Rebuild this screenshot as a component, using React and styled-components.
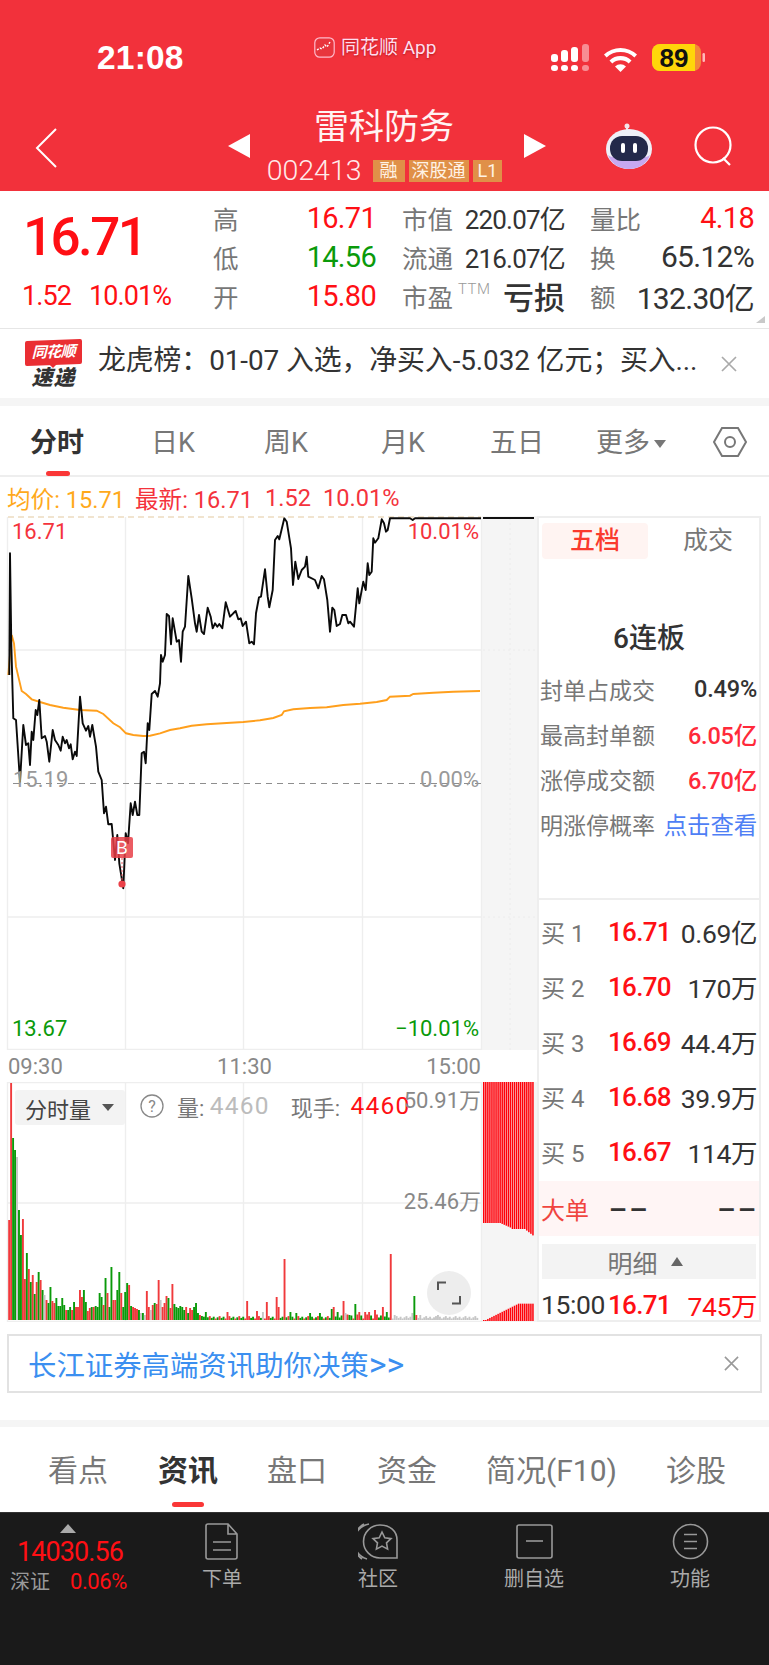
import React from 'react';
import styled, { createGlobalStyle } from 'styled-components';

const Global = createGlobalStyle`
  html, body { margin: 0; padding: 0; background: #fff; }
  body { font-family: Roboto, "Noto Sans CJK SC", sans-serif; }
  * { box-sizing: border-box; }
`;

const RED = '#ff0f14';
const SOFT_RED = '#f4333c';
const GREEN = '#0a9a0a';

const Page = styled.div`
  width: 769px; height: 1665px; overflow: hidden; background: #fff; position: relative; color: #333;
`;

/* header */
const Header = styled.header`
  height: 191px; background: #f2313b; color: #fff; display: flex; flex-direction: column;
`;
const StatusRow = styled.div`
  height: 107px; display: flex; align-items: flex-start; position: relative;
`;
const Clock = styled.div`
  width: 314px; padding: 40px 0 0 97px; font: 700 33.5px/36px "Liberation Sans", sans-serif; letter-spacing: .2px;
`;
const Carrier = styled.div`
  width: 237px; padding-top: 37px; display: flex; align-items: center; gap: 6px; height: 58px;
  font-size: 19px; line-height: 22px; text-shadow: 0 1px 2px rgba(120,0,0,.5); color: #fde;
`;
const StatusIcons = styled.svg`
  margin-top: 40px; display: block;
`;
const NavRow = styled.div`
  height: 84px; display: flex; align-items: flex-start;
`;
const NavLeft = styled.div`
  width: 228px; padding: 21px 0 0 35px;
`;
const Arrow = styled.div`
  width: 0; height: 0; margin-top: 27px; border-top: 12px solid transparent; border-bottom: 12px solid transparent;
  ${p => p.$dir === 'left' ? 'border-right: 22px solid #fff;' : 'border-left: 22px solid #fff;'}
`;
const NavCenter = styled.div`
  width: 274px; display: flex; flex-direction: column; align-items: center;
`;
const Title = styled.div`
  font-size: 35px; line-height: 42px; margin: 0 6px 0 0; height: 52px; font-weight: 400; color: #fff3f3;
`;
const CodeLine = styled.div`
  display: flex; align-items: center; gap: 4px; height: 22px; margin: 1px 5px 0 0;
`;
const Code = styled.span`
  font-size: 28.500px; font-weight: 300; line-height: 22px; margin-right: 7px; letter-spacing: 0; color: #ffeaea;
`;
const Tag = styled.span`
  height: 22px; padding: 0 ${p => p.$pad || 3}px; background: #e09048; color: #fff3e6; font-size: 18px; line-height: 22px;
  display: inline-flex; align-items: center; justify-content: center;
`;
const NavRight = styled.div`
  display: flex; align-items: flex-start; padding-top: 16px;
`;

/* quote */
const Quote = styled.section`
  height: 138px; display: flex; border-bottom: 1px solid #e6e6e6; position: relative; padding-top: 7px;
`;
const PriceCol = styled.div`
  width: 213px; padding-left: 23px;
`;
const BigPrice = styled.div`
  font-size: 53px; line-height: 56px; font-weight: 500; color: ${RED}; letter-spacing: -2.6px; margin-top: 11px; white-space: nowrap;
`;
const PriceSub = styled.div`
  display: flex; gap: 18px; margin-top: 16px; color: ${RED}; font-size: 27px; line-height: 30px; letter-spacing: -.9px;
  margin-left: -1px;
`;
const StatCol = styled.div`
  width: ${p => p.$w}px; margin-right: ${p => p.$mr || 0}px; flex: none;
`;
const StatRow = styled.div`
  height: 39px; display: flex; justify-content: space-between; align-items: center; white-space: nowrap;
`;
const StatLabel = styled.span`
  font-size: 25.5px; color: #777; display: inline-flex; align-items: flex-start;
`;
const Ttm = styled.sup`
  font-size: 15px; color: #999; line-height: 18px; margin: 3px 0 0 5px; letter-spacing: .5px; font-weight: 300;
`;
const StatValue = styled.span`
  font-size: ${p => p.$size || 29}px; font-weight: ${p => p.$weight || 400}; color: ${p => p.$c || '#333'}; letter-spacing: ${p => p.$ls ?? -.7}px;
`;
const Corner = styled.div`
  position: absolute; right: 4px; bottom: 5px; width: 0; height: 0;
  border-bottom: 7px solid #c9c9c9; border-left: 9px solid transparent;
`;

/* ticker */
const Ticker = styled.div`
  height: 69px; display: flex; align-items: center; padding: 0 32px 0 25px;
`;
const LogoBox = styled.div`
  width: 57px; height: 48px; display: flex; flex-direction: column; align-items: center; margin-right: 16px; position: relative;
`;
const LogoTag = styled.div`
  width: 57px; height: 25px; background: #ea2e33; color: #fff; border-radius: 2px; font-size: 15px; font-weight: 700; font-style: italic;
  display: flex; align-items: center; justify-content: center; line-height: 25px; letter-spacing: -.5px; transform: skewY(-2deg);
  &::after { content: ''; position: absolute; left: 24px; top: 24px; border-top: 4px solid #ea2e33; border-left: 4px solid transparent; border-right: 4px solid transparent; }
`;
const LogoText = styled.div`
  font-size: 21px; line-height: 22px; font-weight: 900; font-style: italic; color: #333; margin-top: 2px; letter-spacing: 1px;
`;
const TickerText = styled.div`
  flex: 1; font-size: 27.9px; line-height: 32px; margin-top: -6px; color: #333; white-space: nowrap; letter-spacing: -.1px;
`;
const Band = styled.div`
  height: ${p => p.$h}px; background: #f5f5f5;
`;
const CloseX = styled.svg`
  display: block; flex: none;
`;

/* period tabs */
const PeriodTabs = styled.nav`
  height: 71px; position: relative; border-bottom: 2px solid #eee; display: flex;
`;
const PeriodTab = styled.div`
  position: absolute; left: ${p => p.$x}px; top: 17px; font-size: 27px; line-height: 40px; white-space: nowrap;
  color: ${p => p.$on ? '#333' : '#777'}; font-weight: ${p => p.$on ? 700 : 400};
`;
const RedBar = styled.div`
  position: absolute; left: ${p => p.$x}px; top: ${p => p.$y}px; width: ${p => p.$w}px; height: 5px; border-radius: 3px; background: #fa3737;
`;
const SmallDown = styled.span`
  display: inline-block; width: 0; height: 0; margin-left: 4px; vertical-align: 4px;
  border-top: 8px solid #777; border-left: 6px solid transparent; border-right: 6px solid transparent;
`;
const HexIcon = styled.svg`
  position: absolute; left: 712px; top: 20px;
`;

/* info line */
const InfoLine = styled.div`
  height: 39px; display: flex; align-items: center; padding: 2px 0 0 7px; font-size: 23.6px; white-space: nowrap;
`;
const InfoText = styled.span`
  color: ${p => p.$c}; margin-right: ${p => p.$mr || 0}px;
`;

/* body */
const Body = styled.div`
  display: flex; height: 806px; align-items: flex-start;
`;
const LeftCol = styled.div`
  width: 538px; flex: none;
`;
const ChartBox = styled.div`
  position: relative; width: 538px; height: ${p => p.$h}px;
`;
const ChartSvg = styled.svg`
  display: block;
`;
const ChartLabel = styled.span`
  position: absolute; font-size: 22px; line-height: 24px; white-space: nowrap; color: ${p => p.$c};
  ${p => p.$right != null ? `right: ${p.$right}px;` : `left: ${p.$left}px;`} top: ${p => p.$top}px;
`;
const BMark = styled.div`
  position: absolute; left: 111px; top: 321px; width: 22px; height: 21px; background: rgba(232,64,72,.85); border-radius: 2px;
  color: #fff; font-size: 19px; line-height: 21px; text-align: center;
`;
const Axis = styled.div`
  height: 32px; display: flex; justify-content: space-between; align-items: center; padding: 0 57px 0 8px;
  font-size: 22px; color: #888;
`;
const VolChip = styled.div`
  position: absolute; left: 15px; top: 8px; width: 110px; height: 35px; background: #f3f3f3; border-radius: 3px;
  display: flex; align-items: center; padding-left: 10px; font-size: 22px; color: #444; gap: 11px;
`;
const ChipCaret = styled.span`
  width: 0; height: 0; border-top: 7px solid #555; border-left: 6px solid transparent; border-right: 6px solid transparent;
`;
const VolLine = styled.div`
  position: absolute; left: 140px; top: 6px; height: 35px; display: flex; align-items: center; font-size: 22px; color: #777; white-space: nowrap;
`;
const HelpIcon = styled.svg`
  margin-right: 13px;
`;
const Num = styled.span`
  color: ${p => p.$c}; margin-right: ${p => p.$mr || 0}px; margin-left: ${p => p.$ml || 0}px; font-size: 24.500px; letter-spacing: 1.2px;
`;
const Expand = styled.div`
  position: absolute; left: 427px; top: 189px; width: 44px; height: 44px; border-radius: 50%; background: rgba(235,235,235,.92);
  display: flex; align-items: center; justify-content: center;
`;

/* side panel */
const Side = styled.aside`
  width: 224px; height: 806px; flex: none; margin-left: -1px; border: 2px solid #eee; display: flex; flex-direction: column;
`;
const SideTabs = styled.div`
  display: flex; padding: 5px 0 0 3px; height: 42px; overflow: hidden;
`;
const SideTab = styled.div`
  flex: none; width: ${p => p.$w}px; margin-left: ${p => p.$ml || 0}px; height: 36px; border-radius: 4px; font-size: 25px; line-height: 36px; text-align: center;
  color: ${p => p.$on ? '#fa3a2e' : '#777'}; background: ${p => p.$on ? '#fff4f2' : 'transparent'}; font-weight: ${p => p.$on ? 500 : 400};
`;
const Upper = styled.div`
  height: 342px; border-bottom: 2px solid #eee; padding-top: 61px;
`;
const Heading = styled.div`
  text-align: center; font-size: 28px; line-height: 36px; font-weight: 500; color: #333; margin-bottom: 10px;
`;
const InfoRow = styled.div`
  height: 45px; display: flex; align-items: center; justify-content: space-between; padding: 0 2px 0 1px; white-space: nowrap;
`;
const InfoName = styled.span`
  font-size: 23px; color: #777; letter-spacing: 0;
`;
const InfoVal = styled.span`
  font-size: 23.500px; color: ${p => p.$c || '#333'}; font-weight: ${p => p.$weight || 500}; letter-spacing: -.2px;
`;
const Levels = styled.div`
  padding-top: 4px;
`;
const LevelRow = styled.div`
  height: ${p => p.$h || 55}px; display: grid; grid-template-columns: 67px 62px 1fr; align-items: center; padding: ${p => p.$pt || 0}px 2px 0 2px; white-space: nowrap;
  margin-top: ${p => p.$mt || 0}px;
  ${p => p.$bg && `background: ${p.$bg};`}
`;
const LevelName = styled.span`
  font-size: 24px; color: ${p => p.$c || '#777'};
`;
const LevelPrice = styled.span`
  font-size: 26px; color: ${p => p.$c || RED}; font-weight: 500; letter-spacing: -.7px;
`;
const LevelVol = styled.span`
  font-size: 26.500px; color: ${p => p.$c || '#333'}; text-align: ${p => p.$align || 'right'}; font-weight: 400; letter-spacing: -.4px;
`;
const Dash = styled.span`
  display: inline-block; font-size: 26px; font-weight: 700; color: #333; letter-spacing: 0; transform: scaleX(2);
  transform-origin: ${p => p.$end ? 'right' : 'left'} center; justify-self: ${p => p.$end ? 'end' : 'start'};
`;
const DetailBtn = styled.div`
  margin: 8px 3px 0; height: 35px; background: #f3f3f3; display: flex; align-items: center; justify-content: center; gap: 13px;
  font-size: 25px; color: #777; padding-right: 8px;
`;
const UpCaret = styled.span`
  width: 0; height: 0; border-bottom: 9px solid #666; border-left: 6px solid transparent; border-right: 6px solid transparent;
`;

/* ad */
const Ad = styled.div`
  margin: 12px 7px 0; height: 59px; border: 2px solid #e2e2e2; display: flex; align-items: center; justify-content: space-between;
  padding: 0 21px 0 19px; font-size: 28.4px; color: #3b8ff0; white-space: nowrap;
`;
const AdMore = styled.span`
  font-size: 34px; line-height: 34px;
`;
const Gap = styled.div`
  height: 27px;
`;

/* bottom tabs */
const InfoTabs = styled.nav`
  height: 85px; position: relative;
`;
const InfoTab = styled.div`
  position: absolute; left: ${p => p.$x}px; top: 24px; font-size: 30px; line-height: 40px; white-space: nowrap;
  color: ${p => p.$on ? '#333' : '#777'}; font-weight: ${p => p.$on ? 700 : 400};
`;

/* bar */
const BottomBar = styled.footer`
  height: 154px; background: #1a1a1a; border-top: 1px solid #333; display: flex; align-items: flex-start;
`;
const IndexCell = styled.div`
  width: 144px; flex: none; padding-top: 11px; display: flex; flex-direction: column; align-items: flex-start; position: relative;
`;
const IndexUp = styled.div`
  margin-left: 60px; width: 0; height: 0; border-bottom: 9px solid #aaa; border-left: 8.5px solid transparent; border-right: 8.5px solid transparent;
`;
const IndexValue = styled.div`
  margin: 2px 0 0 17px; font-size: 27px; line-height: 34px; color: ${RED}; letter-spacing: -.9px;
`;
const IndexSub = styled.div`
  display: flex; align-items: center; gap: 20px; margin: -1px 0 0 10px; line-height: 28px;
`;
const IndexName = styled.span`
  color: #999; font-size: 20px;
`;
const IndexPct = styled.span`
  color: ${RED}; font-size: 22px; letter-spacing: -.4px;
`;
const BarItem = styled.div`
  width: 156px; flex: none; display: flex; flex-direction: column; align-items: center; padding-top: 10px; color: #aaa; font-size: 20px; line-height: 26px; gap: 6px;
`;

const BAR_RED = '#f03a3c';
const pts = s => s.trim().split(/\s+/).map(p => { const [x, y] = p.split(',').map(Number); return `${(x / 3).toFixed(1)},${(510 + y / 3).toFixed(1)}`; }).join(' ');

const PRICE = pts(`28,495 30,130 34,400 40,625 48,630 60,815 70,645 78,705 85,700 90,765 95,665 100,690 107,600 112,615 118,570 125,685 135,678 140,695 148,755 158,660 165,690 175,705 182,722 188,680 195,700 200,690 207,715 212,703 218,748 225,725 230,738 240,560 248,640 258,662 265,648 270,680 277,645 288,710 295,785 305,810 312,910 318,890 325,943 335,942 345,1050 352,975 358,1060 370,1135 377,970 384,1000 392,880 398,915 405,875 412,915 418,915 425,730 432,725 437,760 443,640 448,660 455,552 465,543 473,560 480,520 483,435 488,455 495,435 500,312 507,318 513,403 518,325 530,395 537,390 543,455 548,365 555,350 565,198 575,265 585,340 590,365 597,315 605,365 612,372 623,293 632,320 638,355 645,340 652,350 658,342 667,355 677,277 690,320 700,310 707,303 715,328 722,325 728,348 738,335 748,400 755,395 762,403 768,310 777,262 783,260 795,178 803,260 808,292 818,240 825,90 833,78 838,88 853,25 860,35 873,115 879,225 886,155 895,207 905,180 915,170 920,140 925,200 945,210 955,235 965,198 972,208 982,270 990,365 997,293 1003,300 1010,348 1020,342 1027,315 1038,315 1045,340 1050,335 1062,350 1073,235 1078,280 1090,215 1097,240 1103,160 1108,195 1115,185 1120,85 1125,98 1135,85 1145,28 1152,40 1158,65 1163,60 1170,25 1230,25 1238,30 1245,25 1443,25`);
const AVG = pts(`25,495 35,375 42,400 48,470 65,543 78,552 95,568 120,576 150,585 190,593 240,600 290,602 310,612 340,640 360,652 378,670 400,675 430,678 450,677 480,670 510,660 540,655 575,647 620,643 680,639 730,636 780,631 820,624 845,615 852,604 880,598 930,594 980,592 1030,585 1080,581 1130,576 1160,570 1170,560 1230,557 1240,552 1300,548 1360,545 1440,543`);

const HEAD = '100r 237r 182g 170g 163x 110g 85g 101r 41r 67g 51r 38g 45r 26g 38r 48g 40r 30g 25x 20r 17g 33g 19r 17r 22g 14g 14g 22g 15g 10r 10g 13g 10r 18g 13r 13r 30r 23r 30g 18g 9r 12r 13g 13r 14g 13g 27g 23g 15r 42g 27r 13g 53g 20r 20r 30g 48g 27r 13g 28g 37g 35r 14g 13r 12r 11r 10g 7x 7g 5x 29r 13r 10x 15r 17g 16r 40r 20x 13r 17r 24r 22g 12r 36r 16g 13g 12g 14g 13g 10g 13r 7g 12r 10r 13g 17g 7g 5r 4g';
const OVERRIDES = [[615,8,'g'],[680,8,'r'],[740,19,'r'],[770,9,'r'],[785,8,'x'],[800,18,'r'],[830,23,'r'],[836,13,'r'],[853,61,'r'],[870,8,'g'],[885,7,'g'],[930,7,'g'],[960,7,'g'],[990,8,'g'],[995,11,'g'],[1001,13,'r'],[1010,8,'g'],[1030,19,'r'],[1036,7,'x'],[1047,5,'g'],[1065,16,'g'],[1075,8,'r'],[1090,8,'r'],[1107,8,'r'],[1125,10,'r'],[1148,13,'r'],[1155,8,'g'],[1171,66,'r'],[1180,5,'x'],[1237,7,'x'],[1242,24,'g'],[1248,5,'r'],[1260,5,'x'],[1310,5,'x']];
const COLORS = { r: BAR_RED, g: GREEN, x: '#c6c6c6' };

function buildBars() {
  const bars = HEAD.split(' ').map(t => ({ h: parseFloat(t), c: t.slice(-1) }));
  for (let i = bars.length; i < 239; i++) {
    const h = 1.5 + ((i * 7) % 5) * (i > 165 && i < 195 ? 1 : .6);
    const c = i < 195 ? ((i * 3) % 5 < 2 ? 'r' : 'g') : 'x';
    bars.push({ h, c });
  }
  OVERRIDES.forEach(([zx, h, c]) => { const i = Math.round((zx - 25) / 5.9); bars[i] = { h, c }; });
  return bars;
}
const BARS = buildBars();
const GRID = '#eeeeee';
const TAIL = Array.from({ length: 25 }, (_, i) => i);

const PriceChart = () => (
  <ChartBox $h={534}>
    <ChartSvg width="538" height="534" viewBox="0 516 538 534">
      <rect x="482" y="516" width="55" height="534" fill="#f5f5f5" />
      <line x1="510" y1="518" x2="510" y2="1050" stroke="#ececec" strokeDasharray="2 3" />
      <line x1="483" y1="650" x2="537" y2="650" stroke="#ececec" strokeDasharray="2 3" />
      <line x1="483" y1="917" x2="537" y2="917" stroke="#ececec" strokeDasharray="2 3" />
      <path d="M7.5 517V1049.5H481.5V517M125.5 517V1049M243.5 517V1049M362.5 517V1049M8 650H481M8 917H481" fill="none" stroke={GRID} strokeWidth="1.4" />
      <line x1="8" y1="517" x2="481" y2="517" stroke="#e3c9a0" strokeWidth="1.2" strokeDasharray="6 4" />
      <line x1="13" y1="783.5" x2="481" y2="783.5" stroke="#8e8e8e" strokeWidth="1.2" strokeDasharray="6 5" />
      <polyline points={AVG} fill="none" stroke="#ff9f1c" strokeWidth="1.9" />
      <polyline points={PRICE} fill="none" stroke="#0a0a0a" strokeWidth="1.9" strokeLinejoin="round" />
      <line x1="483" y1="518" x2="534" y2="518" stroke="#111" strokeWidth="2" />
      <line x1="122" y1="858" x2="122" y2="884" stroke="#ee5a60" strokeWidth="1" strokeDasharray="2 2" />
      <circle cx="122" cy="884" r="3.6" fill="#ea4048" />
    </ChartSvg>
    <ChartLabel $left={12} $top={4} $c={SOFT_RED}>16.71</ChartLabel>
    <ChartLabel $right={59} $top={4} $c={SOFT_RED}>10.01%</ChartLabel>
    <ChartLabel $left={13} $top={252} $c="#999">15.19</ChartLabel>
    <ChartLabel $right={59} $top={252} $c="#999">0.00%</ChartLabel>
    <ChartLabel $left={12} $top={501} $c={GREEN}>13.67</ChartLabel>
    <ChartLabel $right={59} $top={501} $c={GREEN}>−10.01%</ChartLabel>
    <BMark>B</BMark>
  </ChartBox>
);

const VolumeChart = () => (
  <ChartBox $h={240}>
    <ChartSvg width="538" height="240" viewBox="0 1082 538 240">
      <rect x="482" y="1082" width="55" height="240" fill="#f5f5f5" />
      <path d="M7.5 1082.500H481.500V1321.500H7.5ZM125.500 1083V1321M243.500 1083V1321M362.500 1083V1321M8 1203H481" fill="none" stroke={GRID} strokeWidth="1.4" />
      {BARS.map((b, i) => (
        <rect key={i} x={8.2 + i * 1.967} y={1320 - b.h} width="1.9" height={b.h} fill={COLORS[b.c]} />
      ))}
      {TAIL.map(i => {
        const bottom = i < 8 ? 1223 : i < 14 ? 1223 + (i - 8) * .9 : i < 21 ? 1229 : 1229 + (i - 20) * 1.6;
        const low = Math.max(1, Math.min(i, 17) * 1.02);
        return (
          <g key={i} fill="#ff0009">
            <rect x={483 + i * 2.05} y="1082" width="1.500" height={bottom - 1082} />
            <rect x={483 + i * 2.05} y={1321 - low} width="1.500" height={low} />
          </g>
        );
      })}
    </ChartSvg>
    <VolChip>分时量<ChipCaret /></VolChip>
    <VolLine>
      <HelpIcon width="24" height="24" viewBox="0 0 24 24">
        <circle cx="12" cy="12" r="11" fill="none" stroke="#888" strokeWidth="1.3" />
        <text x="12" y="17.5" textAnchor="middle" fontSize="16" fill="#888" fontFamily="Roboto">?</text>
      </HelpIcon>
      量:&nbsp;<Num $c="#bcbcbc" $mr={21}>4460</Num>现手:&nbsp;<Num $c={RED} $ml={5}>4460</Num>
    </VolLine>
    <ChartLabel $right={57} $top={7} $c="#888">50.91万</ChartLabel>
    <ChartLabel $right={57} $top={108} $c="#888">25.46万</ChartLabel>
    <Expand>
      <svg width="24" height="24" viewBox="0 0 24 24" fill="none" stroke="#555" strokeWidth="2">
        <path d="M1 9V1.5H9M23 15V22.5H15" />
      </svg>
    </Expand>
  </ChartBox>
);

const X = ({ size = 16, c = '#aaa' }) => (
  <CloseX width={size} height={size} viewBox="0 0 16 16" fill="none" stroke={c} strokeWidth="1.7">
    <path d="M1 1L15 15M15 1L1 15" />
  </CloseX>
);

const LEVELS = [['买 1', '16.71', '0.69亿'], ['买 2', '16.70', '170万'], ['买 3', '16.69', '44.4万'], ['买 4', '16.68', '39.9万'], ['买 5', '16.67', '114万']];

export default function App() {
  return (
    <Page>
      <Global />
      <Header>
        <StatusRow>
          <Clock>21:08</Clock>
          <Carrier>
            <svg width="21" height="21" viewBox="0 0 21 21">
              <rect x=".8" y=".8" width="19.4" height="19.4" rx="5" fill="#e8353d" stroke="#fbc" strokeWidth="1.2" />
              <path d="M3 13l3-2 2 1 3-4 2 2 3-5" fill="none" stroke="#fff" strokeWidth="1.4" strokeDasharray="2 1.5" />
            </svg>
            同花顺 App
          </Carrier>
          <StatusIcons width="218" height="36" viewBox="0 0 218 36">
            <g fill="#fff">
              <rect x="0" y="25" width="7" height="6" rx="3" />
              <rect x="10" y="25" width="7" height="6" rx="3" />
              <rect x="20" y="25" width="7" height="6" rx="3" />
              <rect x="31" y="25" width="7" height="6" rx="3" opacity=".45" />
              <rect x="0" y="14" width="7" height="8" rx="3" />
              <rect x="10" y="10" width="7" height="12" rx="3" />
              <rect x="20" y="7" width="7" height="15" rx="3" />
              <rect x="31" y="4" width="7" height="18" rx="3" opacity=".45" />
              <path d="M53 14.5a24 24 0 0 1 33 0l-2.6 3a20 20 0 0 0-27.8 0z" />
              <path d="M58.5 20.5a16 16 0 0 1 22 0l-2.8 3a12 12 0 0 0-16.4 0z" />
              <path d="M64 26.5a8 8 0 0 1 11 0l-5.5 5.5z" />
            </g>
            <rect x="101" y="4" width="49" height="27" rx="8" fill="#f3a63a" opacity=".75" />
            <path d="M109 4H144V31H109a8 8 0 0 1-8-8V12a8 8 0 0 1 8-8z" fill="#ffd60a" />
            <rect x="151.500" y="13" width="2.500" height="9" rx="1.200" fill="#ffb9b9" />
            <text x="123" y="26.500" textAnchor="middle" fontSize="26" fontWeight="700" fill="#111" fontFamily="Liberation Sans">89</text>
          </StatusIcons>
        </StatusRow>
        <NavRow>
          <NavLeft>
            <svg width="23" height="40" viewBox="0 0 23 40" fill="none" stroke="#fff" strokeWidth="2">
              <path d="M21 1L2 20L21 39" />
            </svg>
          </NavLeft>
          <Arrow $dir="left" />
          <NavCenter>
            <Title>雷科防务</Title>
            <CodeLine>
              <Code>002413</Code>
              <Tag $pad={7}>融</Tag>
              <Tag>深股通</Tag>
              <Tag $pad={5}>L1</Tag>
            </CodeLine>
          </NavCenter>
          <Arrow $dir="right" />
          <NavRight>
            <svg width="50" height="46" viewBox="0 0 50 46" style={{ marginLeft: 58 }}>
              <circle cx="23" cy="3" r="2.500" fill="#f4e6ea" />
              <path d="M23 5V9" stroke="#f4e6ea" strokeWidth="2" />
              <ellipse cx="25" cy="26" rx="23" ry="20" fill="#eef0f8" />
              <path d="M4 32c3 9 12 14 21 14s18-5 21-14c-6 5-36 5-42 0z" fill="#c7a8f0" />
              <rect x="6" y="13" width="38" height="25" rx="12" fill="#23294a" />
              <rect x="17" y="20" width="4" height="10" rx="2" fill="#fff" />
              <rect x="29" y="20" width="4" height="10" rx="2" fill="#fff" />
            </svg>
            <svg width="42" height="42" viewBox="0 0 42 42" fill="none" stroke="#fff" strokeWidth="2.2" style={{ marginLeft: 39, marginTop: 3 }}>
              <circle cx="20" cy="19" r="17.500" />
              <path d="M30 32L37 39" />
            </svg>
          </NavRight>
        </NavRow>
      </Header>

      <Quote>
        <PriceCol>
          <BigPrice>16.71</BigPrice>
          <PriceSub><span>1.52</span><span>10.01%</span></PriceSub>
        </PriceCol>
        <StatCol $w={163} $mr={26}>
          <StatRow><StatLabel>高</StatLabel><StatValue $c={RED}>16.71</StatValue></StatRow>
          <StatRow><StatLabel>低</StatLabel><StatValue $c={GREEN}>14.56</StatValue></StatRow>
          <StatRow><StatLabel>开</StatLabel><StatValue $c={RED}>15.80</StatValue></StatRow>
        </StatCol>
        <StatCol $w={163} $mr={25}>
          <StatRow><StatLabel>市值</StatLabel><StatValue $size={26} $ls={-.8}>220.07亿</StatValue></StatRow>
          <StatRow><StatLabel>流通</StatLabel><StatValue $size={26} $ls={-.8}>216.07亿</StatValue></StatRow>
          <StatRow><StatLabel>市盈<Ttm>TTM</Ttm></StatLabel><StatValue $size={31} $weight={500} $ls={0}>亏损</StatValue></StatRow>
        </StatCol>
        <StatCol $w={164}>
          <StatRow><StatLabel>量比</StatLabel><StatValue $c={RED}>4.18</StatValue></StatRow>
          <StatRow><StatLabel>换</StatLabel><StatValue $size={30}>65.12%</StatValue></StatRow>
          <StatRow><StatLabel>额</StatLabel><StatValue $size={30}>132.30亿</StatValue></StatRow>
        </StatCol>
        <Corner />
      </Quote>

      <Ticker>
        <LogoBox>
          <LogoTag>同花顺</LogoTag>
          <LogoText>速递</LogoText>
        </LogoBox>
        <TickerText>龙虎榜：01-07 入选，净买入-5.032 亿元；买入...</TickerText>
        <X size={16} />
      </Ticker>
      <Band $h={8} />

      <PeriodTabs>
        <PeriodTab $x={30} $on>分时</PeriodTab>
        <PeriodTab $x={151}>日K</PeriodTab>
        <PeriodTab $x={264}>周K</PeriodTab>
        <PeriodTab $x={381}>月K</PeriodTab>
        <PeriodTab $x={490}>五日</PeriodTab>
        <PeriodTab $x={596}>更多<SmallDown /></PeriodTab>
        <HexIcon width="36" height="32" viewBox="0 0 36 32" fill="none" stroke="#777" strokeWidth="2">
          <path d="M10 2H26L34 16L26 30H10L2 16Z" />
          <circle cx="18" cy="16" r="5" />
        </HexIcon>
        <RedBar $x={46} $y={65} $w={24} />
      </PeriodTabs>

      <InfoLine>
        <InfoText $c="#ffa91b" $mr={10}>均价: 15.71</InfoText>
        <InfoText $c={SOFT_RED} $mr={12}>最新: 16.71</InfoText>
        <InfoText $c={SOFT_RED} $mr={12}>1.52</InfoText>
        <InfoText $c={SOFT_RED}>10.01%</InfoText>
      </InfoLine>

      <Body>
        <LeftCol>
          <PriceChart />
          <Axis><span>09:30</span><span>11:30</span><span>15:00</span></Axis>
          <VolumeChart />
        </LeftCol>
        <Side>
          <SideTabs>
            <SideTab $w={106} $on>五档</SideTab>
            <SideTab $w={118} $ml={1}>成交</SideTab>
          </SideTabs>
          <Upper>
            <Heading>6连板</Heading>
            <InfoRow><InfoName>封单占成交</InfoName><InfoVal>0.49%</InfoVal></InfoRow>
            <InfoRow><InfoName>最高封单额</InfoName><InfoVal $c="#ff2a3a">6.05亿</InfoVal></InfoRow>
            <InfoRow><InfoName>涨停成交额</InfoName><InfoVal $c="#ff2a3a">6.70亿</InfoVal></InfoRow>
            <InfoRow><InfoName>明涨停概率</InfoName><InfoVal $c="#4f7ff5" $weight={400}>点击查看</InfoVal></InfoRow>
          </Upper>
          <Levels>
            {LEVELS.map(([n, p, v]) => (
              <LevelRow key={n}><LevelName>{n}</LevelName><LevelPrice>{p}</LevelPrice><LevelVol>{v}</LevelVol></LevelRow>
            ))}
            <LevelRow $bg="#fff5f5" $mt={2}>
              <LevelName $c="#f0453f">大单</LevelName>
              <Dash>--</Dash>
              <Dash $end>--</Dash>
            </LevelRow>
            <DetailBtn>明细<UpCaret /></DetailBtn>
            <LevelRow $h={41} $pt={6}>
              <LevelVol $align="left">15:00</LevelVol>
              <LevelPrice>16.71</LevelPrice>
              <LevelVol $c={RED}>745万</LevelVol>
            </LevelRow>
          </Levels>
        </Side>
      </Body>

      <Ad>
        <span>长江证券高端资讯助你决策<AdMore>&gt;&gt;</AdMore></span>
        <X size={15} c="#999" />
      </Ad>
      <Gap />
      <Band $h={7} />

      <InfoTabs>
        <InfoTab $x={48}>看点</InfoTab>
        <InfoTab $x={158} $on>资讯</InfoTab>
        <InfoTab $x={267}>盘口</InfoTab>
        <InfoTab $x={377}>资金</InfoTab>
        <InfoTab $x={486}>简况(F10)</InfoTab>
        <InfoTab $x={666}>诊股</InfoTab>
        <RedBar $x={172} $y={75} $w={32} />
      </InfoTabs>

      <BottomBar>
        <IndexCell>
          <IndexUp />
          <IndexValue>14030.56</IndexValue>
          <IndexSub><IndexName>深证</IndexName><IndexPct>0.06%</IndexPct></IndexSub>
        </IndexCell>
        <BarItem>
          <svg width="34" height="37" viewBox="0 0 34 37" fill="none" stroke="#999" strokeWidth="1.6">
            <path d="M3 1H23L32 11V34a2 2 0 0 1-2 2H3a2 2 0 0 1-2-2V3a2 2 0 0 1 2-2zM23 1V11H32M8 19H26M8 27H26" />
          </svg>
          下单
        </BarItem>
        <BarItem>
          <svg width="40" height="37" viewBox="0 0 40 37" fill="none" stroke="#999" strokeWidth="1.6">
            <path d="M39 35H22A15 15 0 0 1 22 2C32 2 39 8 39 17Z" />
            <path d="M11 1A18 18 0 0 0 9 36M6 1A21 21 0 0 0 4 36" />
            <path d="M24 9l2.800 5.800 6.200.8-4.500 4.300 1.100 6.200-5.600-3-5.600 3 1.100-6.200-4.500-4.300 6.200-.8z" />
          </svg>
          社区
        </BarItem>
        <BarItem>
          <svg width="37" height="37" viewBox="0 0 37 37" fill="none" stroke="#999" strokeWidth="1.6">
            <rect x="1" y="2" width="35" height="33" rx="2" />
            <path d="M10 18H27" />
          </svg>
          删自选
        </BarItem>
        <BarItem>
          <svg width="37" height="37" viewBox="0 0 37 37" fill="none" stroke="#999" strokeWidth="1.6">
            <circle cx="18.500" cy="18.500" r="17" />
            <path d="M12 11.500H25M12 18.500H25M12 25.500H25" />
          </svg>
          功能
        </BarItem>
      </BottomBar>
    </Page>
  );
}
